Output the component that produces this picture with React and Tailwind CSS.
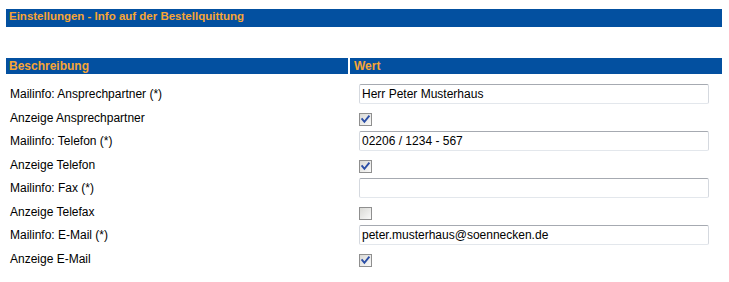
import React from "react";

const rows = [
  { label: "Mailinfo: Ansprechpartner (*)", type: "text", value: "Herr Peter Musterhaus" },
  { label: "Anzeige Ansprechpartner", type: "check", checked: true },
  { label: "Mailinfo: Telefon (*)", type: "text", value: "02206 / 1234 - 567" },
  { label: "Anzeige Telefon", type: "check", checked: true },
  { label: "Mailinfo: Fax (*)", type: "text", value: "" },
  { label: "Anzeige Telefax", type: "check", checked: false },
  { label: "Mailinfo: E-Mail (*)", type: "text", value: "peter.musterhaus@soennecken.de" },
  { label: "Anzeige E-Mail", type: "check", checked: true },
];

const CheckBox = ({ checked }) => {
  return (
    <svg width="13" height="13" viewBox="0 0 13 13" className="block">
      <defs>
        <linearGradient id="cbfill" x1="0" y1="0" x2="1" y2="1">
          <stop offset="0" stopColor="#d8d8d4" />
          <stop offset="1" stopColor="#fbfbfb" />
        </linearGradient>
      </defs>
      <rect x="0.5" y="0.5" width="12" height="12" fill="url(#cbfill)" stroke="#8f8f8f" />
      {checked && (
        <polyline
          points="3.2,6.2 5.4,8.8 9.8,3.4"
          fill="none"
          stroke="#2b4ea6"
          strokeWidth="1.9"
          strokeLinecap="square"
        />
      )}
    </svg>
  );
};

const App = () => {
  return (
    <div className="min-h-[282px] bg-white font-['Liberation_Sans',Arial,sans-serif] text-[12px] text-black">
      <div className="ml-[6px] w-[716px] pt-[9px]">
        <div className="h-[18px] bg-[#0350a0] pl-[3px] text-[11.5px] font-bold leading-[15px] text-[#f8a535]">
          Einstellungen - Info auf der Bestellquittung
        </div>

        <div className="mt-[31px] flex h-[16px] gap-[2px] text-[12px] font-bold text-[#f8a535]">
          <div className="flex w-[342px] items-center bg-[#0350a0] pl-[3px]">
            Beschreibung
          </div>
          <div className="flex flex-1 items-center bg-[#0350a0] pl-[4px]">
            Wert
          </div>
        </div>

        <div className="pt-[8px]">
          {rows.map((row, index) => (
            <div
              key={index}
              className={`flex ${row.type === "text" ? "h-[24px]" : "h-[23px]"}`}
            >
              <div className="flex w-[344px] items-center pl-[4px]">
                {row.label}
              </div>
              <div className="flex flex-1 pl-[9px]">
                {row.type === "text" ? (
                  <div className="flex h-[20px] w-[350px] items-center self-center rounded-[2px] border border-[#d5d9df] border-t-[#a6aab1] border-b-[#e3e7ec] pl-[2px]">
                    {row.value}
                  </div>
                ) : (
                  <div className="pt-[7px]">
                    <CheckBox checked={row.checked} />
                  </div>
                )}
              </div>
            </div>
          ))}
        </div>
      </div>
    </div>
  );
};

export default App;
